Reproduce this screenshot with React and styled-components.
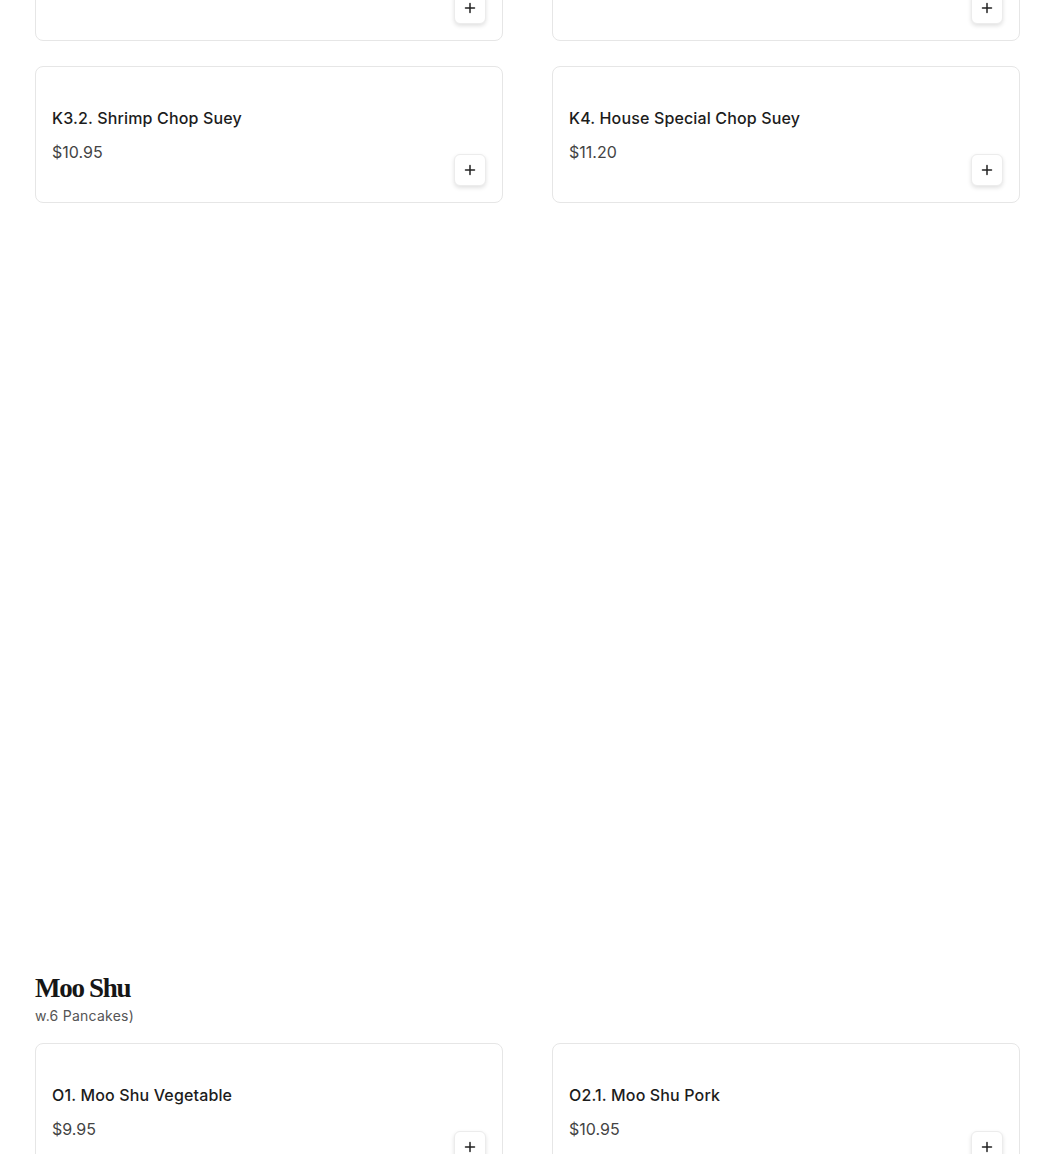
import React from "react"
import styled, { createGlobalStyle } from "styled-components"

const GlobalStyle = createGlobalStyle`
  html, body {
    margin: 0;
    padding: 0;
    background: #ffffff;
    font-family: Inter, "Noto Sans", "Liberation Sans", sans-serif;
    color: #1c1c1c;
    overflow: hidden;
  }
`

const menu = [
  {
    id: "chop-suey",
    items: [
      { name: "K3.1. Chicken Chop Suey", price: "$10.45" },
      { name: "K3.3. Beef Chop Suey", price: "$11.20" },
      { name: "K3.2. Shrimp Chop Suey", price: "$10.95" },
      { name: "K4. House Special Chop Suey", price: "$11.20" },
    ],
  },
  {
    id: "moo-shu",
    title: "Moo Shu",
    note: "w.6 Pancakes)",
    items: [
      { name: "O1. Moo Shu Vegetable", price: "$9.95" },
      { name: "O2.1. Moo Shu Pork", price: "$10.95" },
      { name: "O2.2. Moo Shu Chicken", price: "$10.95" },
      { name: "O3. Moo Shu Beef", price: "$11.20" },
    ],
  },
]

const Page = styled.main`
  width: 985px;
  margin: -96px 0 0 35px;
`

const Section = styled.section`
  margin-top: ${(p) => (p.$first ? "0" : "769px")};
`

const Heading = styled.h2`
  margin: 0 0 2px;
  font-family: "Liberation Serif", "DejaVu Serif", serif;
  font-weight: 900;
  font-size: 27px;
  line-height: 32px;
  letter-spacing: -1.3px;
  color: #161616;
`

const Note = styled.p`
  margin: 0 0 17px;
  font-size: 14px;
  line-height: 20px;
  letter-spacing: 0.25px;
  color: #555555;
`

const Grid = styled.div`
  display: grid;
  grid-template-columns: 1fr 1fr;
  column-gap: 49px;
  row-gap: 25px;
`

const Card = styled.article`
  display: grid;
  grid-template-columns: 1fr auto;
  padding: 16px;
  border: 1px solid #e6e6e6;
  border-radius: 8px;
  background: #fff;
`

const Info = styled.div`
  display: flex;
  flex-direction: column;
  gap: 10px;
  padding: 23px 0 22px;
`

const Name = styled.h3`
  margin: 0;
  font-size: 16px;
  line-height: 24px;
  font-weight: 500;
  color: #1c1c1c;
  letter-spacing: 0.15px;
`

const Price = styled.span`
  font-size: 16px;
  line-height: 24px;
  font-weight: 400;
  color: #444444;
`

const AddButton = styled.button`
  align-self: end;
  width: 32px;
  height: 32px;
  padding: 0;
  display: flex;
  align-items: center;
  justify-content: center;
  border: 1px solid #ececec;
  border-radius: 6px;
  background: #fff;
  box-shadow: 0 2px 4px rgba(0, 0, 0, 0.12);
  cursor: pointer;
`

const Plus = () => (
  <svg width="12" height="12" viewBox="0 0 12 12" fill="none">
    <path d="M6 1.5v9M1.5 6h9" stroke="#222" strokeWidth="1.5" strokeLinecap="round" />
  </svg>
)

export default function App() {
  return (
    <>
      <GlobalStyle />
      <Page>
        {menu.map((section, i) => (
          <Section key={section.id} $first={i === 0}>
            {section.title && <Heading>{section.title}</Heading>}
            {section.note && <Note>{section.note}</Note>}
            <Grid>
              {section.items.map((item) => (
                <Card key={item.name}>
                  <Info>
                    <Name>{item.name}</Name>
                    <Price>{item.price}</Price>
                  </Info>
                  <AddButton aria-label={`Add ${item.name}`}>
                    <Plus />
                  </AddButton>
                </Card>
              ))}
            </Grid>
          </Section>
        ))}
      </Page>
    </>
  )
}
